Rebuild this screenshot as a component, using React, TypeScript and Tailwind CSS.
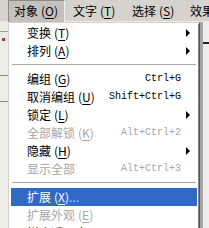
import React from 'react'

type Item =
  | { sep: true }
  | {
      sep?: false
      label: string
      key: string
      tail?: string
      shortcut?: string
      submenu?: boolean
      disabled?: boolean
      active?: boolean
    }

const items: Item[] = [
  { label: '变换', key: 'T', submenu: true },
  { label: '排列', key: 'A', submenu: true },
  { sep: true },
  { label: '编组', key: 'G', shortcut: 'Ctrl+G' },
  { label: '取消编组', key: 'U', shortcut: 'Shift+Ctrl+G' },
  { label: '锁定', key: 'L', submenu: true },
  { label: '全部解锁', key: 'K', shortcut: 'Alt+Ctrl+2', disabled: true },
  { label: '隐藏', key: 'H', submenu: true },
  { label: '显示全部', key: '', shortcut: 'Alt+Ctrl+3', disabled: true },
  { sep: true },
  { label: '扩展', key: 'X', tail: '...', active: true },
  { label: '扩展外观', key: 'E', disabled: true },
  { label: '拼合透明度', key: 'F', tail: '...' },
]

const font = { fontFamily: '"Noto Sans CJK SC", "DejaVu Sans", sans-serif' }

function Mnemonic({ k }: { k: string }) {
  if (!k) return null
  return (
    <span className="ml-[3px]">
      (<span className="underline underline-offset-2">{k}</span>)
    </span>
  )
}

function Arrow() {
  return (
    <svg width="5" height="8" viewBox="0 0 5 8" className="shrink-0">
      <path d="M0 0 L4 4 L0 8 Z" fill="currentColor" />
    </svg>
  )
}

export default function App() {
  return (
    <div className="w-[209px] h-[228px] overflow-hidden bg-[#d6d3ce] flex flex-col text-[12px] leading-none text-black" style={font}>
      {/* menu bar */}
      <div className="h-[22px] shrink-0 flex items-center bg-[#d6d3ce] border-b border-[#ece9e4]">
        <div className="ml-[8px] w-[57px] shrink-0 h-[22px] flex items-center pl-[5px] bg-[#c4c1bc] border-t border-l border-[#8e8b86] border-r border-r-[#f4f2ef]">
          对象<Mnemonic k="O" />
        </div>
        <div className="ml-[8px] w-[59px] shrink-0 whitespace-nowrap">
          文字<Mnemonic k="T" />
        </div>
        <div className="w-[58px] shrink-0 whitespace-nowrap">
          选择<Mnemonic k="S" />
        </div>
        <div className="whitespace-nowrap">效果</div>
      </div>

      <div className="flex flex-1 min-h-0">
        {/* left strip of the panel behind */}
        <div className="w-[8px] shrink-0 bg-[#eeece8] flex flex-col">
          <div className="h-[10px] border-b border-[#9a9a9a]" />
          <div className="h-[18px] relative">
            <span className="absolute left-[2px] top-[6px] w-[3px] h-[3px] bg-[#c03030]" />
          </div>
          <div className="h-[26px] border-b border-[#8a8a8a]" />
          <div className="h-[26px] border-b border-[#8a8a8a]" />
        </div>

        {/* dropdown */}
        <div className="w-[192px] shrink-0 bg-white border-l border-l-[#d6d3ce] border-t border-t-[#d6d3ce] border-r border-r-[#555] shadow-[inset_1px_1px_0_#fff,inset_-1px_0_0_#888] px-[2px] pt-[1px] overflow-hidden">
          {items.map((it, i) =>
            it.sep ? (
              <div key={i} className="h-[10px] flex items-center px-[1px]">
                <div className="w-full border-t border-[#a7a6aa] border-b border-b-white" />
              </div>
            ) : (
              <div
                key={i}
                className={`h-[18px] flex items-center pl-[16px] pr-[6px] ${
                  it.active ? 'bg-[#316ac5] text-white' : it.disabled ? 'text-[#a6a6a6]' : 'text-black'
                }`}
              >
                <span className="whitespace-nowrap">
                  {it.label}
                  <Mnemonic k={it.key} />
                  {it.tail && <span className="opacity-60">{it.tail}</span>}
                </span>
                <span className="flex-1" />
                {it.shortcut && (
                  <span className="whitespace-nowrap mr-[10px] text-[10px]" style={{ fontFamily: '"Liberation Mono", monospace' }}>
                    {it.shortcut}
                  </span>
                )}
                {it.submenu && <Arrow />}
              </div>
            )
          )}
        </div>

        {/* right strip */}
        <div className="flex-1 flex">
          <div className="w-[3px] bg-[#a8a6a2]" />
          <div className="flex-1 bg-[#f0eeea] flex flex-col">
            <div className="h-[22px] border-b-[2px] border-[#222]" />
          </div>
        </div>
      </div>
    </div>
  )
}
